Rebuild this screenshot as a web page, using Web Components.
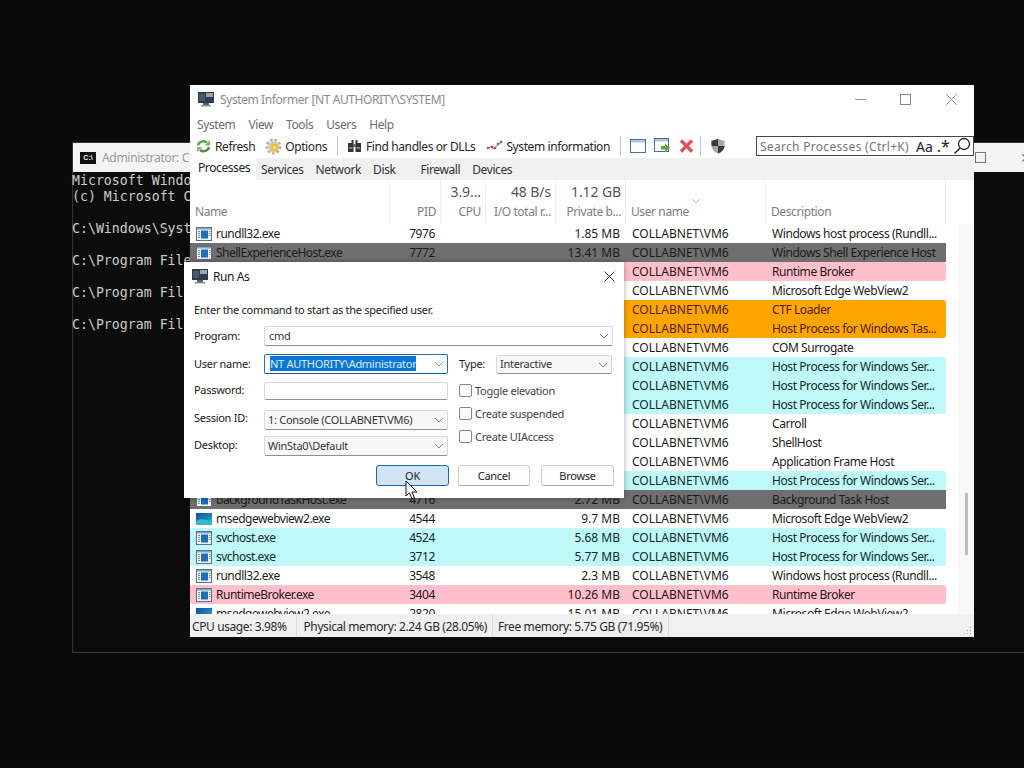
<!DOCTYPE html>
<html lang="en">
<head>
<meta charset="utf-8">
<title>System Informer</title>
<style>
  html, body { margin: 0; padding: 0; background: #0a0a0a; }
  body { font: 12px "Noto Sans", "Open Sans", sans-serif; }
</style>
</head>
<body>
<desk-top>
  <cmd-window></cmd-window>
  <si-window></si-window>
  <run-as></run-as>
</desk-top>

<script>
'use strict'

const UI_FONT = '"Noto Sans", "Open Sans", sans-serif';

// icons
const ICONS = {
  app: `<svg width="18" height="17" viewBox="0 0 18 17"><rect x="1" y="1" width="16" height="11" fill="#2c3b4e"/><rect x="9" y="2" width="7" height="4" fill="#9aa5b1"/><rect x="2" y="3" width="6" height="7" fill="#46586c"/><rect x="6" y="12" width="6" height="2" fill="#55616e"/><rect x="4" y="14" width="10" height="1.5" fill="#8a939c"/></svg>`,
  proc: `<svg width="16" height="14" viewBox="0 0 16 14"><rect x=".5" y=".5" width="15" height="13" fill="#eef3f8" stroke="#5f6f80"/><rect x="1" y="1" width="14" height="1.5" fill="#7fa7c9"/><rect x="5" y="3.5" width="7" height="8" fill="#1d6fb8"/><path d="M2 4.500h2M2 6.500h2M2 8.500h2M2 10.500h2M13 4.500h1.500M13 6.500h1.500M13 8.500h1.500" stroke="#7d8d9c"/></svg>`,
  edge: `<svg width="16" height="14" viewBox="0 0 16 14"><defs><linearGradient id="e" x1="0" y1="0" x2="1" y2="1"><stop offset="0" stop-color="#0f4f97"/><stop offset=".55" stop-color="#1a7fc0"/><stop offset="1" stop-color="#3cc8bd"/></linearGradient></defs><rect y="1" width="16" height="12" fill="url(#e)"/><path d="M0 9c5-3 10-2 16 1v3H0z" fill="#37bcc0"/></svg>`,
  refresh: `<svg width="17" height="16" viewBox="0 0 17 16"><path d="M3 7.500a5.500 5 0 0 1 9-3" fill="none" stroke="#5f9e4c" stroke-width="2.500"/><path d="M15 2v5.500h-5.500z" fill="#7cb75e"/><path d="M14 9a5.500 5 0 0 1-9 3" fill="none" stroke="#4f8f48" stroke-width="2.500"/><path d="M2 14.500V9h5.500z" fill="#8cc06e"/></svg>`,
  gear: `<svg width="17" height="17" viewBox="0 0 17 17"><circle cx="8.500" cy="8.500" r="6.500" fill="none" stroke="#b5b5a6" stroke-width="3" stroke-dasharray="2.600 1.800"/><circle cx="8.500" cy="8.500" r="5.500" fill="#cfcfc2"/><circle cx="9.500" cy="9.500" r="4" fill="#e6c13c"/><circle cx="9.500" cy="9.500" r="1.300" fill="#f8efc0"/></svg>`,
  find: `<svg width="15" height="14" viewBox="0 0 15 14"><rect x="4.500" y="1" width="2" height="3" fill="#3a3a3a"/><rect x="8.500" y="1" width="2" height="3" fill="#3a3a3a"/><rect x="1" y="4" width="5.500" height="9" fill="#333"/><rect x="8.500" y="4" width="5.500" height="9" fill="#333"/><rect x="6" y="5" width="3" height="3" fill="#666"/><path d="M2 9h3.500M9.500 9H13" stroke="#ccc"/></svg>`,
  graph: `<svg width="17" height="12" viewBox="0 0 17 12"><path d="M1 8l4-1 3 2 4-5 4-2" fill="none" stroke="#777"/><circle cx="2" cy="8" r="1.300" fill="#c8434f"/><circle cx="6" cy="7" r="1.300" fill="#7a3fa0"/><circle cx="9" cy="8" r="1.300" fill="#c8434f"/><circle cx="12" cy="4" r="1.300" fill="#c8434f"/><circle cx="15" cy="2" r="1.300" fill="#666"/></svg>`,
  win: `<svg width="16" height="14" viewBox="0 0 16 14"><rect x=".5" y=".5" width="15" height="13" fill="#fff" stroke="#4c6f96"/><rect x="1" y="1" width="14" height="2.500" fill="#a9c7e6"/></svg>`,
  winGo: `<svg width="17" height="16" viewBox="0 0 17 16"><rect x=".5" y=".5" width="14" height="13" fill="#fff" stroke="#4c6f96"/><rect x="1" y="1" width="13" height="2.500" fill="#a9c7e6"/><path d="M7 8h4V5.500l5 4.200-5 4.300V11.500H7z" fill="#5fa63f"/></svg>`,
  cross: `<svg width="15" height="14" viewBox="0 0 15 14"><path d="M2 1.500l11 11M13 1.500l-11 11" stroke="#e4505a" stroke-width="3.400"/></svg>`,
  shield: `<svg width="16" height="16" viewBox="0 0 16 16"><path d="M8 .5C6 2 3.500 2.500 1.500 2.500v5C1.500 11.500 5 14.500 8 15.500c3-1 6.500-4 6.500-8v-5C12.500 2.500 10 2 8 .5z" fill="#a8a8a8"/><path d="M8 .5C6 2 3.500 2.500 1.500 2.500V8H8zM8 8v7.500c3-1 6.500-4 6.500-7.500z" fill="#3c3c3c"/></svg>`,
  glass: `<svg width="18" height="18" viewBox="0 0 18 18"><circle cx="11" cy="7" r="5.500" fill="none" stroke="#222" stroke-width="1.300"/><path d="M7 11l-5.500 5.500" stroke="#222" stroke-width="1.500"/></svg>`,
  chevron: `<svg width="10" height="6" viewBox="0 0 10 6"><path d="M1 1l4 4 4-4" fill="none" stroke="#8a8a8a"/></svg>`,
  sort: `<svg width="8" height="4" viewBox="0 0 8 4"><path d="M.5.500L4 3.500 7.500.5" fill="none" stroke="#a8a8a8"/></svg>`,
  cursor: `<svg width="14" height="20" viewBox="0 0 14 20"><path d="M1 1v15l3.500-3.200 2.500 6 2.500-1-2.500-5.800h5z" fill="#fff" stroke="#111"/></svg>`
};

// free canvas the windows sit on
class DeskTop extends HTMLElement {
  constructor() {
    super();
    this.attachShadow({ mode: 'open' }).innerHTML = `
      <style>
        :host { display: block; position: relative; width: 1024px; height: 768px; overflow: hidden; background: #0a0a0a; }
      </style>
      <slot></slot>`;
  }
}

const cmdTemplate = document.createElement('template');
cmdTemplate.innerHTML = `
<style>
  :host {
    position: absolute; left: 72px; top: 142px; width: 980px; height: 511px;
    display: flex; flex-direction: column;
    background: #0c0c0c; border: 1px solid #353535; box-sizing: border-box;
  }
  .title {
    height: 29px; flex: none; background: #f4f4f4; display: flex; align-items: center;
    padding-left: 7px; gap: 6px; color: #9a9a9a; font: 12px ${UI_FONT}; letter-spacing: -.3px; white-space: nowrap;
  }
  .badge {
    width: 16px; height: 12px; background: #111; color: #eee; font: bold 7px/12px "Liberation Sans", sans-serif; letter-spacing: 0; text-align: center; flex: none;
  }
  .ctrls { position: absolute; left: 902px; top: 0; height: 29px; display: flex; align-items: center; gap: 34px; }
  .box { width: 9px; height: 9px; border: 1px solid #777; }
  .x { color: #888; font-size: 14px; }
  pre {
    margin: 1px 0 0 -1px; color: #cccccc;
    font: 13.24px/16px "DejaVu Sans Mono", monospace;
  }
</style>
<div class="title"><span class="badge">C:\\</span><span>Administrator: C:\\Windows\\System32\\cmd.exe</span></div>
<pre>Microsoft Windows
(c) Microsoft Corporation

C:\\Windows\\System32

C:\\Program Files

C:\\Program Files

C:\\Program Files</pre>
<div class="ctrls"><span class="box"></span><span class="x">✕</span></div>
`;

class CmdWindow extends HTMLElement {
  constructor() {
    super();
    this.attachShadow({ mode: 'open' }).appendChild(cmdTemplate.content.cloneNode(true));
  }
}

const rowTemplate = document.createElement('template');
rowTemplate.innerHTML = `
<style>
  :host {
    display: grid; grid-template-columns: 200px 51px 45px 70px 70px 140px 180px;
    height: 19px; font: 12px/19px ${UI_FONT}; letter-spacing: 0; color: #1c1c1c; white-space: nowrap;
  }
  :host([tint="gray"]) { background: #6f6f6f; color: #1a1a1a; }
  :host([tint="pink"]) { background: #ffc0cb; color: #2a1216; }
  :host([tint="cyan"]) { background: #bff8f8; color: #0e2a2a; }
  :host([tint="orange"]) { background: #ffa500; color: #521c00; }
  :host([edge~="top"]) { border-top-left-radius: 3px; border-top-right-radius: 3px; }
  :host([edge~="bottom"]) { border-bottom-left-radius: 3px; border-bottom-right-radius: 3px; }
  .name { display: flex; align-items: center; gap: 4px; padding-left: 6px; }
  .label { letter-spacing: -.5px; }
  svg { display: block; }
  .pid { text-align: right; padding-right: 6px; letter-spacing: -.4px; }
  .mem { text-align: right; padding-right: 6px; }
  .user { padding-left: 6px; overflow: hidden; }
  .desc { padding-left: 6px; overflow: hidden; letter-spacing: -.42px; }
</style>
<div class="name"><span class="ico"></span><span class="label"></span></div>
<div class="pid"></div>
<div></div>
<div></div>
<div class="mem"></div>
<div class="user">COLLABNET\\VM6</div>
<div class="desc"></div>
`;

class ProcRow extends HTMLElement {
  constructor() {
    super();
    this.attachShadow({ mode: 'open' }).appendChild(rowTemplate.content.cloneNode(true));
  }

  connectedCallback() {
    const root = this.shadowRoot;
    root.querySelector('.label').textContent = this.getAttribute('name') || '';
    root.querySelector('.pid').textContent = this.getAttribute('pid') || '';
    root.querySelector('.mem').textContent = this.getAttribute('mem') || '';
    root.querySelector('.desc').textContent = this.getAttribute('desc') || '';
    const icon = this.getAttribute('icon');
    if (icon) root.querySelector('.ico').innerHTML = ICONS[icon];
  }
}

const siTemplate = document.createElement('template');
siTemplate.innerHTML = `
<style>
  :host {
    position: absolute; left: 190px; top: 85px; width: 784px; height: 552px;
    display: flex; flex-direction: column; background: #fff; font: 12px ${UI_FONT}; letter-spacing: -.4px;
  }
  svg { display: block; }
  .title { height: 26px; padding: 1px 0 0 7px; flex: none; display: flex; align-items: center; gap: 5px; color: #8b8b8b; }
  .ctrls { margin-left: auto; display: flex; align-items: center; }
  .ctrls svg { margin-right: 34px; }
  .ctrls svg:nth-child(2) { margin-right: 35px; }
  .ctrls svg:last-child { margin-right: 17px; }
  .menu { height: 24px; flex: none; display: flex; align-items: center; padding-left: 7px; gap: 13px; color: #6d6d6d; }
  .bar { height: 20px; flex: none; display: flex; align-items: center; padding-left: 5px; color: #262626; white-space: nowrap; }
  .tool { display: flex; align-items: center; gap: 3px; margin-right: 10px; }
  .tool.find { gap: 4px; margin-right: 11px; }
  .sep { width: 1px; height: 20px; background: #c8c8c8; margin-right: 9px; }
  .ibtn { margin-right: 8px; }
  .ibtn.end { margin-right: 6px; }
  .search {
    margin-left: auto; width: 218px; height: 20px; box-sizing: border-box; border: 1px solid #444;
    display: flex; align-items: center; padding-left: 3px; color: #777; background: #fff; letter-spacing: .3px;
  }
  .search b { font-weight: 400; color: #222; font-size: 14px; margin-left: 7px; letter-spacing: 0; }
  .search i { font-style: normal; color: #222; font-size: 16px; margin-left: 4px; letter-spacing: 0; }
  .search svg { margin-left: 3px; }
  .tabs { height: 22px; margin-top: 2px; flex: none; background: #f0f0f0; display: flex; color: #333; }
  .tab { padding-top: 3px; margin-left: 12px; line-height: 18px; }
  .tab.on { margin: 0; background: #fff; width: 66px; box-sizing: border-box; padding: 1px 0 0 8px; color: #222; }
  .tab.first { margin-left: 5px; }
  .tab.far { margin-left: 25px; }
  .head {
    height: 44px; flex: none; width: 756px; display: grid;
    grid-template-columns: 200px 51px 45px 70px 70px 140px 180px; color: #7d7d7d;
  }
  .col {
    box-sizing: border-box; border-right: 1px solid #eeeeee; padding: 3px 4px 3px 5px;
    display: flex; flex-direction: column; white-space: nowrap; overflow: hidden;
  }
  .col.r { text-align: right; }
  .top { height: 19px; line-height: 18px; font-size: 14px; color: #555; display: flex; letter-spacing: -.1px; }
  .r .top { justify-content: flex-end; }
  .top.mid { justify-content: center; align-items: flex-end; }
  .top.mid svg { margin-bottom: -1px; }
  .low { height: 19px; line-height: 19px; }
  .body { flex: 1; min-height: 0; display: flex; }
  .list { width: 756px; flex: none; overflow: hidden; }
  .gut { width: 12px; flex: none; }
  .track { width: 16px; flex: none; background: #f8f8f8; }
  .thumb { width: 3px; height: 62px; margin: 269px 0 0 7px; background: #bdbdbd; }
  .status {
    height: 23px; flex: none; background: #f0f0f0; display: flex; align-items: center; color: #2a2a2a; white-space: nowrap; position: relative;
  }
  .status span { height: 23px; line-height: 21px; padding-top: 2px; box-sizing: border-box; border-right: 1px solid #dcdcdc; }
  .status .a { padding-left: 2px; padding-right: 9px; margin-right: 6px; }
  .status .b { padding-left: 1px; padding-right: 5px; margin-right: 4px; }
  .status .c { padding-left: 1px; padding-right: 6px; }
  .status svg { position: absolute; right: 2px; bottom: 2px; }
</style>
<div class="title">
  ${ICONS.app}<span>System Informer [NT AUTHORITY\\SYSTEM]</span>
  <div class="ctrls">
    <svg width="11" height="11" viewBox="0 0 11 11"><path d="M0 5.500h11" stroke="#999"/></svg>
    <svg width="11" height="11" viewBox="0 0 11 11"><rect x=".5" y=".5" width="10" height="10" fill="none" stroke="#888"/></svg>
    <svg width="11" height="11" viewBox="0 0 11 11"><path d="M0 0l11 11M11 0L0 11" stroke="#999"/></svg>
  </div>
</div>
<div class="menu"><span>System</span><span>View</span><span>Tools</span><span>Users</span><span>Help</span></div>
<div class="bar">
  <div class="tool">${ICONS.refresh}<span>Refresh</span></div>
  <div class="tool">${ICONS.gear}<span>Options</span></div>
  <div class="sep"></div>
  <div class="tool find">${ICONS.find}<span>Find handles or DLLs</span></div>
  <div class="tool">${ICONS.graph}<span>System information</span></div>
  <div class="sep"></div>
  <div class="ibtn">${ICONS.win}</div>
  <div class="ibtn">${ICONS.winGo}</div>
  <div class="ibtn end">${ICONS.cross}</div>
  <div class="sep"></div>
  <div>${ICONS.shield}</div>
  <div class="search"><span>Search Processes (Ctrl+K)</span><b>Aa</b><i>.*</i>${ICONS.glass}</div>
</div>
<div class="tabs">
  <div class="tab on">Processes</div>
  <div class="tab first">Services</div>
  <div class="tab">Network</div>
  <div class="tab">Disk</div>
  <div class="tab far">Firewall</div>
  <div class="tab">Devices</div>
</div>
<div class="head">
  <div class="col"><div class="top"></div><div class="low">Name</div></div>
  <div class="col r"><div class="top"></div><div class="low">PID</div></div>
  <div class="col r"><div class="top">3.9...</div><div class="low">CPU</div></div>
  <div class="col r"><div class="top">48 B/s</div><div class="low">I/O total r...</div></div>
  <div class="col r"><div class="top">1.12 GB</div><div class="low">Private b...</div></div>
  <div class="col"><div class="top mid">${ICONS.sort}</div><div class="low">User name</div></div>
  <div class="col"><div class="top"></div><div class="low">Description</div></div>
</div>
<div class="body">
  <div class="list">
    <proc-row icon="proc" name="rundll32.exe" pid="7976" mem="1.85 MB" desc="Windows host process (Rundll..."></proc-row>
    <proc-row tint="gray" icon="proc" name="ShellExperienceHost.exe" pid="7772" mem="13.41 MB" desc="Windows Shell Experience Host"></proc-row>
    <proc-row tint="pink" edge="top bottom" desc="Runtime Broker"></proc-row>
    <proc-row desc="Microsoft Edge WebView2"></proc-row>
    <proc-row tint="orange" edge="top" desc="CTF Loader"></proc-row>
    <proc-row tint="orange" edge="bottom" desc="Host Process for Windows Tas..."></proc-row>
    <proc-row desc="COM Surrogate"></proc-row>
    <proc-row tint="cyan" edge="top" desc="Host Process for Windows Ser..."></proc-row>
    <proc-row tint="cyan" desc="Host Process for Windows Ser..."></proc-row>
    <proc-row tint="cyan" edge="bottom" desc="Host Process for Windows Ser..."></proc-row>
    <proc-row desc="Carroll"></proc-row>
    <proc-row desc="ShellHost"></proc-row>
    <proc-row desc="Application Frame Host"></proc-row>
    <proc-row tint="cyan" edge="top bottom" desc="Host Process for Windows Ser..."></proc-row>
    <proc-row tint="gray" icon="proc" name="backgroundTaskHost.exe" pid="4716" mem="2.72 MB" desc="Background Task Host"></proc-row>
    <proc-row icon="edge" name="msedgewebview2.exe" pid="4544" mem="9.7 MB" desc="Microsoft Edge WebView2"></proc-row>
    <proc-row tint="cyan" edge="top" icon="proc" name="svchost.exe" pid="4524" mem="5.68 MB" desc="Host Process for Windows Ser..."></proc-row>
    <proc-row tint="cyan" edge="bottom" icon="proc" name="svchost.exe" pid="3712" mem="5.77 MB" desc="Host Process for Windows Ser..."></proc-row>
    <proc-row icon="proc" name="rundll32.exe" pid="3548" mem="2.3 MB" desc="Windows host process (Rundll..."></proc-row>
    <proc-row tint="pink" edge="top bottom" icon="proc" name="RuntimeBroker.exe" pid="3404" mem="10.26 MB" desc="Runtime Broker"></proc-row>
    <proc-row icon="edge" name="msedgewebview2.exe" pid="2820" mem="15.01 MB" desc="Microsoft Edge WebView2"></proc-row>
  </div>
  <div class="gut"></div>
  <div class="track"><div class="thumb"></div></div>
</div>
<div class="status">
  <span class="a">CPU usage: 3.98%</span>
  <span class="b">Physical memory: 2.24 GB (28.05%)</span>
  <span class="c">Free memory: 5.75 GB (71.95%)</span>
  <svg width="10" height="10" viewBox="0 0 10 10"><path d="M8 2h1v1H8zM5 5h1v1H5zM8 5h1v1H8zM2 8h1v1H2zM5 8h1v1H5zM8 8h1v1H8z" fill="#aaa"/></svg>
</div>
`;

class SiWindow extends HTMLElement {
  constructor() {
    super();
    this.attachShadow({ mode: 'open' }).appendChild(siTemplate.content.cloneNode(true));
  }
}

const comboTemplate = document.createElement('template');
comboTemplate.innerHTML = `
<style>
  :host {
    display: flex; align-items: center; box-sizing: border-box; height: 20px; padding-left: 4px; padding-bottom: 2px;
    border: 1px solid #d9d9d9; border-bottom-color: #8f8f8f; border-radius: 2px; background: #fff; color: #333; white-space: nowrap;
  }
  :host([soft]) { background: #f7f7f7; padding-left: 3px; }
  :host([focused]) { border: 1px solid #2a6ea6; border-bottom-color: #0a5a9a; color: #333; }
  :host([plain]) svg { display: none; }
  .v { flex: 1; }
  svg { display: block; margin: 2px 3px 0 0; }
  ::slotted(mark) { background: #0a78d4; color: #dbe9f6; margin-left: 1px; }
</style>
<span class="v"><slot></slot></span>
${ICONS.chevron}
`;

class ComboField extends HTMLElement {
  constructor() {
    super();
    this.attachShadow({ mode: 'open' }).appendChild(comboTemplate.content.cloneNode(true));
  }
}

const checkTemplate = document.createElement('template');
checkTemplate.innerHTML = `
<style>
  :host { display: flex; align-items: center; gap: 3px; height: 23px; color: #444; white-space: nowrap; }
  i { width: 13px; height: 13px; box-sizing: border-box; border: 1px solid #858585; border-radius: 2px; background: #fafafa; }
</style>
<i></i><slot></slot>
`;

class CheckField extends HTMLElement {
  constructor() {
    super();
    this.attachShadow({ mode: 'open' }).appendChild(checkTemplate.content.cloneNode(true));
  }
}

const btnTemplate = document.createElement('template');
btnTemplate.innerHTML = `
<style>
  :host {
    display: flex; align-items: center; justify-content: center; box-sizing: border-box; height: 21px;
    border: 1px solid #d0d0d0; border-bottom-color: #a8a8a8; border-radius: 3px; background: #fdfdfd; color: #222;
  }
  :host([hot]) { background: #cfe4f5; border: 1px solid #1b6aa5; }
</style>
<slot></slot>
`;

class DlgButton extends HTMLElement {
  constructor() {
    super();
    this.attachShadow({ mode: 'open' }).appendChild(btnTemplate.content.cloneNode(true));
  }
}

const runAsTemplate = document.createElement('template');
runAsTemplate.innerHTML = `
<style>
  :host {
    position: absolute; left: 184px; top: 262px; width: 440px; height: 236px;
    display: flex; flex-direction: column; background: #fff; color: #222; font: 11px ${UI_FONT}; letter-spacing: -.28px;
    box-shadow: 0 0 6px rgba(0, 0, 0, .35);
  }
  svg { display: block; }
  .title { height: 28px; flex: none; display: flex; align-items: center; gap: 4px; padding: 0 9px 0 7px; font-size: 12px; letter-spacing: -.4px; }
  .title svg:last-child { margin-left: auto; }
  .intro { margin: 12px 0 0 10px; line-height: 16px; }
  .line { display: flex; align-items: center; height: 20px; }
  .line label { width: 70px; flex: none; margin-bottom: 2px; }
  .prog { margin: 8px 11px 0 10px; }
  .prog combo-field { flex: 1; }
  .cols { display: flex; margin: 8px 0 0 10px; }
  .left { width: 254px; flex: none; }
  .left combo-field { flex: 1; }
  .pass { height: 18px; margin-top: 8px; }
  .pass combo-field { height: 18px; }
  .pass label { margin-bottom: 4px; }
  .sess { margin-top: 10px; }
  .sess label { margin-bottom: 6px; }
  .desk { margin-top: 6px; }
  .desk label { margin-bottom: 4px; }
  .right { margin-left: 11px; width: 153px; }
  .type { margin-top: 1px; height: 19px; margin-bottom: 5px; }
  .type label { width: 37px; }
  .type combo-field { width: 116px; height: 19px; flex: none; }
  .btns { display: flex; justify-content: flex-end; margin: 9px 10px 0 0; }
  .ok { width: 73px; margin-right: 9px; }
  .cancel { width: 72px; margin-right: 11px; }
  .browse { width: 73px; }
  .cursor { position: absolute; left: 221px; top: 218px; }
</style>
<div class="title">
  ${ICONS.app}<span>Run As</span>
  <svg width="11" height="11" viewBox="0 0 11 11"><path d="M.5.5l10 10M10.500.5l-10 10" stroke="#333"/></svg>
</div>
<div class="intro">Enter the command to start as the specified user.</div>
<div class="line prog"><label>Program:</label><combo-field>cmd</combo-field></div>
<div class="cols">
  <div class="left">
    <div class="line"><label>User name:</label><combo-field focused><mark>NT AUTHORITY\\Administrator</mark></combo-field></div>
    <div class="line pass"><label>Password:</label><combo-field plain></combo-field></div>
    <div class="line sess"><label>Session ID:</label><combo-field soft>1: Console (COLLABNET\\VM6)</combo-field></div>
    <div class="line desk"><label>Desktop:</label><combo-field soft>WinSta0\\Default</combo-field></div>
  </div>
  <div class="right">
    <div class="line type"><label>Type:</label><combo-field soft>Interactive</combo-field></div>
    <check-field>Toggle elevation</check-field>
    <check-field>Create suspended</check-field>
    <check-field>Create UIAccess</check-field>
  </div>
</div>
<div class="btns">
  <dlg-button class="ok" hot>OK</dlg-button>
  <dlg-button class="cancel">Cancel</dlg-button>
  <dlg-button class="browse">Browse</dlg-button>
</div>
<div class="cursor">${ICONS.cursor}</div>
`;

class RunAs extends HTMLElement {
  constructor() {
    super();
    this.attachShadow({ mode: 'open' }).appendChild(runAsTemplate.content.cloneNode(true));
  }
}

customElements.define('desk-top', DeskTop);
customElements.define('cmd-window', CmdWindow);
customElements.define('proc-row', ProcRow);
customElements.define('si-window', SiWindow);
customElements.define('combo-field', ComboField);
customElements.define('check-field', CheckField);
customElements.define('dlg-button', DlgButton);
customElements.define('run-as', RunAs);
</script>
</body>
</html>
